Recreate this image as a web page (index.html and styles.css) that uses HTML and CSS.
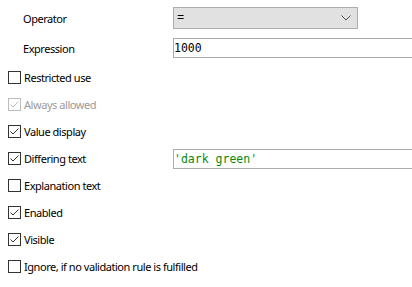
FILE: index.html
```html
<!DOCTYPE html>
<html lang="en">
<head>
    <meta charset="UTF-8">
    <meta name="viewport" content="width=device-width, initial-scale=1.0">
    <title>Condition Properties</title>
    <link rel="stylesheet" href="styles.css">
</head>
<body>
    <div class="panel">
        <div class="field">
            <span class="label">Operator</span>
            <div class="select">
                <span>=</span>
                <svg class="chevron" width="10" height="6" viewBox="0 0 10 6">
                    <polyline points="0.5,0.5 5,5 9.5,0.5" fill="none" stroke="#555" stroke-width="1"/>
                </svg>
            </div>
        </div>
        <div class="field field-expr">
            <span class="label">Expression</span>
            <div class="textbox mono">1000</div>
        </div>

        <ul class="checks">
            <li class="check">
                <span class="item"><span class="box"></span>Restricted use</span>
            </li>
            <li class="check disabled">
                <span class="item">
                    <span class="box"><svg width="11" height="11" viewBox="0 0 11 11"><polyline points="1.5,5.5 4,8 9.5,2.5" fill="none" stroke="currentColor" stroke-width="1"/></svg></span>Always allowed
                </span>
            </li>
            <li class="check">
                <span class="item">
                    <span class="box"><svg width="11" height="11" viewBox="0 0 11 11"><polyline points="1.5,5.5 4,8 9.5,2.5" fill="none" stroke="currentColor" stroke-width="1"/></svg></span>Value display
                </span>
            </li>
            <li class="check">
                <span class="item">
                    <span class="box"><svg width="11" height="11" viewBox="0 0 11 11"><polyline points="1.5,5.5 4,8 9.5,2.5" fill="none" stroke="currentColor" stroke-width="1"/></svg></span>Differing text
                </span>
                <div class="textbox mono green">'dark green'</div>
            </li>
            <li class="check">
                <span class="item"><span class="box"></span>Explanation text</span>
            </li>
            <li class="check">
                <span class="item">
                    <span class="box"><svg width="11" height="11" viewBox="0 0 11 11"><polyline points="1.5,5.5 4,8 9.5,2.5" fill="none" stroke="currentColor" stroke-width="1"/></svg></span>Enabled
                </span>
            </li>
            <li class="check">
                <span class="item">
                    <span class="box"><svg width="11" height="11" viewBox="0 0 11 11"><polyline points="1.5,5.5 4,8 9.5,2.5" fill="none" stroke="currentColor" stroke-width="1"/></svg></span>Visible
                </span>
            </li>
            <li class="check">
                <span class="item"><span class="box"></span>Ignore, if no validation rule is fulfilled</span>
            </li>
        </ul>
    </div>
</body>
</html>
```

FILE: styles.css
```css
html, body {
    margin: 0;
    padding: 0;
    background: #fff;
    overflow: hidden;
}
body {
    font-family: "Noto Sans", "Open Sans", sans-serif;
    font-size: 11px;
    letter-spacing: -0.45px;
    color: #000;
}
.panel {
    padding: 7px 0 0 8px;
}
.field {
    display: grid;
    grid-template-columns: 165px 185px;
    align-items: center;
    height: 22px;
}
.field-expr {
    grid-template-columns: 165px 1fr;
    margin-top: 9px;
    height: 20px;
}
.label {
    padding-left: 15px;
}
.select {
    box-sizing: border-box;
    height: 22px;
    border: 1px solid #adadad;
    background: #e1e1e1;
    display: flex;
    align-items: center;
    justify-content: space-between;
    padding: 0 6px 0 3px;
    font-family: "Liberation Mono", monospace;
    font-size: 12px;
    letter-spacing: 0;
}
.chevron {
    display: block;
}
.textbox {
    box-sizing: border-box;
    height: 20px;
    border: 1px solid #ababab;
    border-right: none;
    background: #fff;
    display: flex;
    align-items: center;
    padding-left: 0;
}
.mono {
    font-family: "DejaVu Sans Mono", monospace;
    font-size: 11.5px;
    letter-spacing: 0;
}
.green {
    color: #0a8a0a;
}
.checks {
    list-style: none;
    margin: 6px 0 0;
    padding: 0;
}
.check {
    display: grid;
    grid-template-columns: 165px 1fr;
    align-items: center;
    height: 27px;
}
.item {
    display: flex;
    align-items: center;
    white-space: nowrap;
}
.box {
    box-sizing: border-box;
    flex-shrink: 0;
    width: 13px;
    height: 13px;
    border: 1px solid #333;
    background: #fff;
    margin-right: 3px;
    color: #333;
    display: flex;
}
.box svg {
    display: block;
}
.disabled {
    color: #9a9a9a;
}
.disabled .box {
    border-color: #bcbcbc;
    color: #bcbcbc;
}
```
